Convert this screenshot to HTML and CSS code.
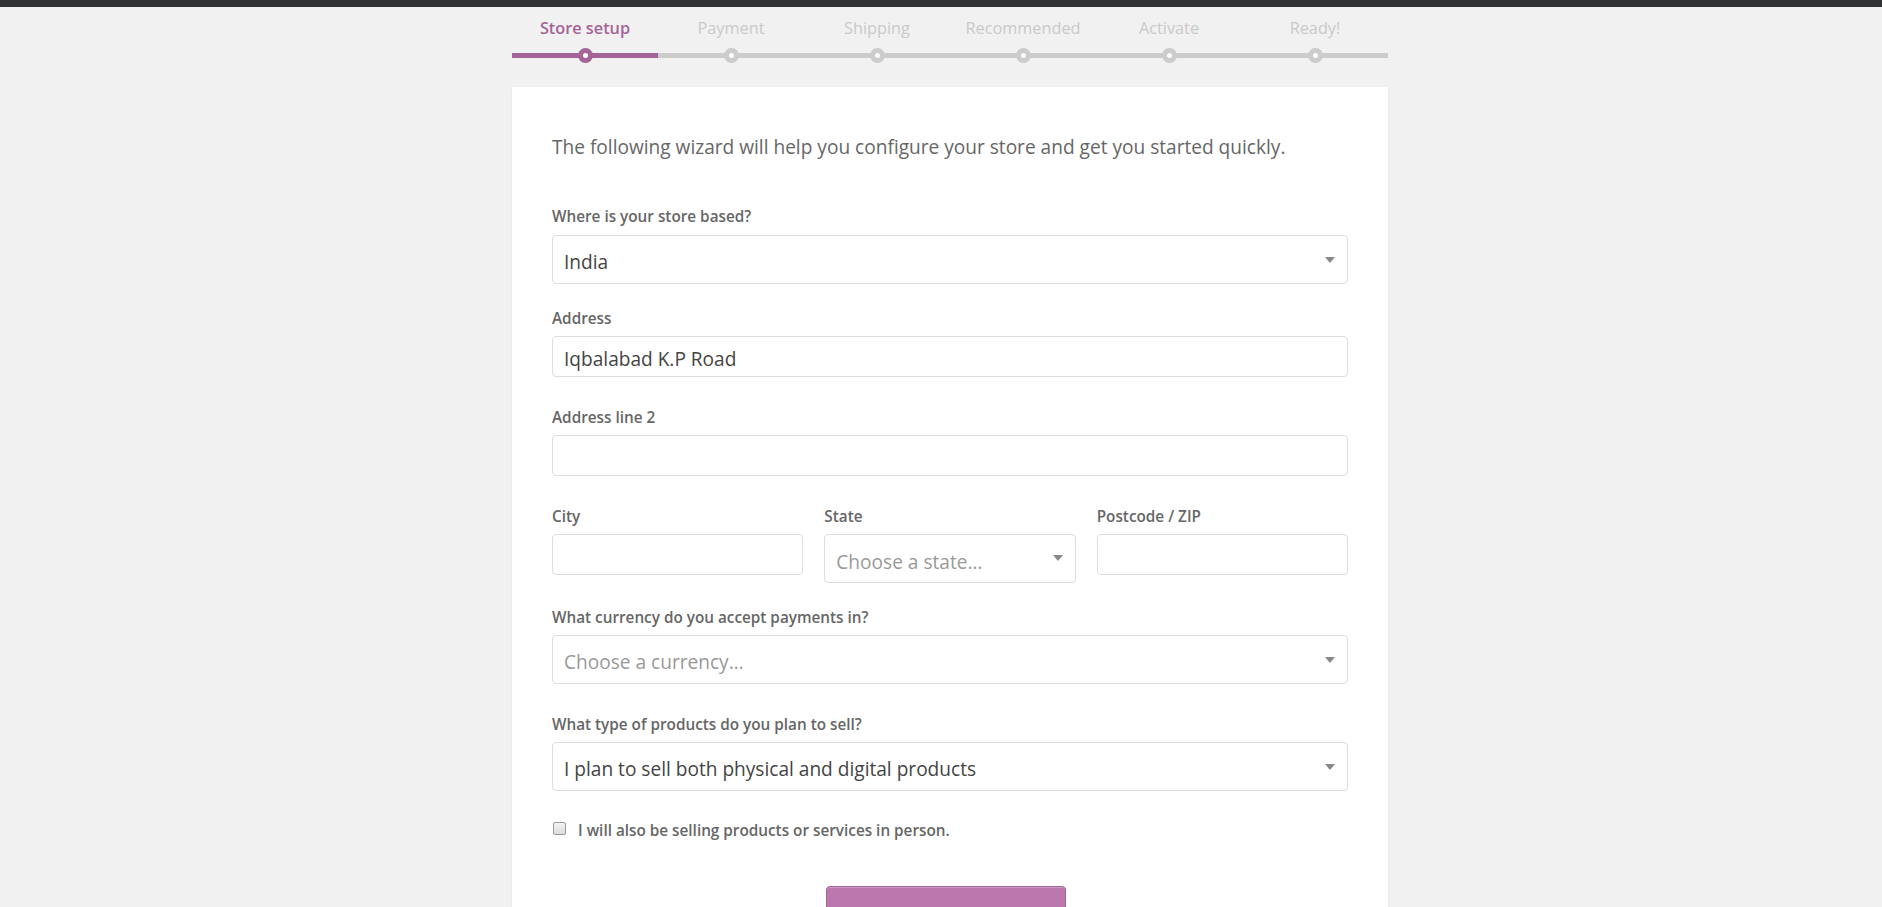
FILE: index.html
```html
<!DOCTYPE html>
<html lang="en">
<head>
<meta charset="utf-8">
<title>WooCommerce › Setup Wizard</title>
<link rel="stylesheet" href="styles.css">
</head>
<body>
<div class="topbar"></div>
<div class="page">
  <div class="wrap">
    <ol class="steps">
      <li class="step active">Store setup</li>
      <li class="step">Payment</li>
      <li class="step">Shipping</li>
      <li class="step">Recommended</li>
      <li class="step">Activate</li>
      <li class="step">Ready!</li>
    </ol>
    <div class="card">
      <p class="intro">The following wizard will help you configure your store and get you started quickly.</p>

      <div class="field first">
        <label class="label">Where is your store based?</label>
        <div class="select"><span class="value">India</span><span class="arrow"></span></div>
      </div>

      <div class="field gap-sm">
        <label class="label">Address</label>
        <input class="input" type="text" value="Iqbalabad K.P Road">
      </div>

      <div class="field gap-lg">
        <label class="label">Address line 2</label>
        <input class="input" type="text" value="">
      </div>

      <div class="field gap-lg row3">
        <div class="col">
          <label class="label">City</label>
          <input class="input" type="text" value="">
        </div>
        <div class="col">
          <label class="label">State</label>
          <div class="select low"><span class="value placeholder">Choose a state…</span><span class="arrow"></span></div>
        </div>
        <div class="col">
          <label class="label">Postcode / ZIP</label>
          <input class="input" type="text" value="">
        </div>
      </div>

      <div class="field gap-sm">
        <label class="label">What currency do you accept payments in?</label>
        <div class="select"><span class="value placeholder">Choose a currency…</span><span class="arrow"></span></div>
      </div>

      <div class="field gap-lg">
        <label class="label">What type of products do you plan to sell?</label>
        <div class="select"><span class="value">I plan to sell both physical and digital products</span><span class="arrow"></span></div>
      </div>

      <div class="check-row">
        <input class="checkbox" type="checkbox">
        <span class="check-label">I will also be selling products or services in person.</span>
      </div>

      <div class="actions">
        <button class="button-primary" type="button">Let's go!</button>
      </div>
    </div>
  </div>
</div>
</body>
</html>
```

FILE: styles.css
```css
html, body {
  margin: 0;
  padding: 0;
  height: 100%;
  overflow: hidden;
}

body {
  background: #f1f1f1;
  font-family: "Open Sans", "Noto Sans", sans-serif;
  color: #666;
}

.topbar {
  height: 7px;
  background: #313236;
}

.page {
  padding-left: 18px;
}

.wrap {
  width: 876px;
  margin: 0 auto;
}

/* Steps */
.steps {
  list-style: none;
  display: flex;
  margin: 9px 0 29px;
  padding: 0;
}

.step {
  flex: 1 1 0;
  position: relative;
  text-align: center;
  font-size: 16.3px;
  line-height: 24px;
  color: #c9c9c9;
  padding-bottom: 13px;
  border-bottom: 5px solid #ccc;
}

.step::before {
  content: "";
  position: absolute;
  left: 50%;
  bottom: -10px;
  margin-left: -7.5px;
  width: 5px;
  height: 5px;
  border: 5px solid #ccc;
  border-radius: 50%;
  background: #fff;
}

.step.active {
  color: #a46497;
  font-weight: 600;
  border-bottom-color: #a46497;
}

.step.active::before {
  border-color: #a46497;
}

/* Card */
.card {
  background: #fff;
  padding: 45px 40px 0;
  box-shadow: 0 1px 3px rgba(0, 0, 0, 0.06);
  min-height: 900px;
}

.intro {
  margin: 0 0 44px;
  font-size: 19.1px;
  line-height: 30px;
  color: #666;
}

.label {
  display: block;
  font-size: 15.3px;
  font-weight: 600;
  line-height: 20px;
  color: #666;
  margin-bottom: 8px;
}

.field.first .label {
  margin-bottom: 9px;
}

.field.gap-sm {
  margin-top: 24px;
}

.field.gap-lg {
  margin-top: 30px;
}

.row3 {
  display: grid;
  grid-template-columns: 1fr 1fr 1fr;
  column-gap: 21px;
  align-items: start;
}

.input {
  display: block;
  box-sizing: border-box;
  width: 100%;
  height: 41px;
  margin: 0;
  padding: 5px 11px 0;
  border: 1px solid #ddd;
  border-radius: 4px;
  background: #fff;
  font-family: "Open Sans", "Noto Sans", sans-serif;
  font-size: 19.1px;
  color: #444;
  outline: none;
  box-shadow: none;
}

.select {
  box-sizing: border-box;
  height: 49px;
  display: flex;
  align-items: center;
  padding: 4px 12px 0 11px;
  border: 1px solid #ddd;
  border-radius: 4px;
  background: #fff;
}

.select.low {
  padding-top: 7px;
}

.select .value {
  flex: 1 1 auto;
  font-size: 19.1px;
  color: #444;
  white-space: nowrap;
  overflow: hidden;
}

.select .value.placeholder {
  color: #999;
}

.select .arrow {
  flex: none;
  width: 0;
  height: 0;
  margin-top: -4px;
  border-left: 5px solid transparent;
  border-right: 5px solid transparent;
  border-top: 6px solid #888;
}

.select.low .arrow {
  margin-top: -9px;
}

/* Checkbox */
.check-row {
  display: flex;
  align-items: flex-start;
  margin-top: 29px;
}

.checkbox {
  -webkit-appearance: none;
  appearance: none;
  flex: none;
  box-sizing: border-box;
  width: 13px;
  height: 13px;
  margin: 2px 12px 0 1px;
  border: 1px solid #9a9a9a;
  border-radius: 2px;
  background: linear-gradient(#f4f4f4, #dcdcdc);
}

.check-label {
  font-size: 15.3px;
  font-weight: 600;
  line-height: 20px;
  color: #666;
}

/* Actions */
.actions {
  margin-top: 46px;
  text-align: center;
}

.button-primary {
  width: 240px;
  margin-right: 9px;
  padding: 24px 0;
  border: 1px solid #a36597;
  border-radius: 4px;
  background: #bb77ae;
  box-shadow: inset 0 1px 0 rgba(255, 255, 255, 0.25), 0 1px 0 #a36597;
  color: #fff;
  font-family: "Open Sans", "Noto Sans", sans-serif;
  font-size: 19.1px;
  line-height: 20px;
}
```
